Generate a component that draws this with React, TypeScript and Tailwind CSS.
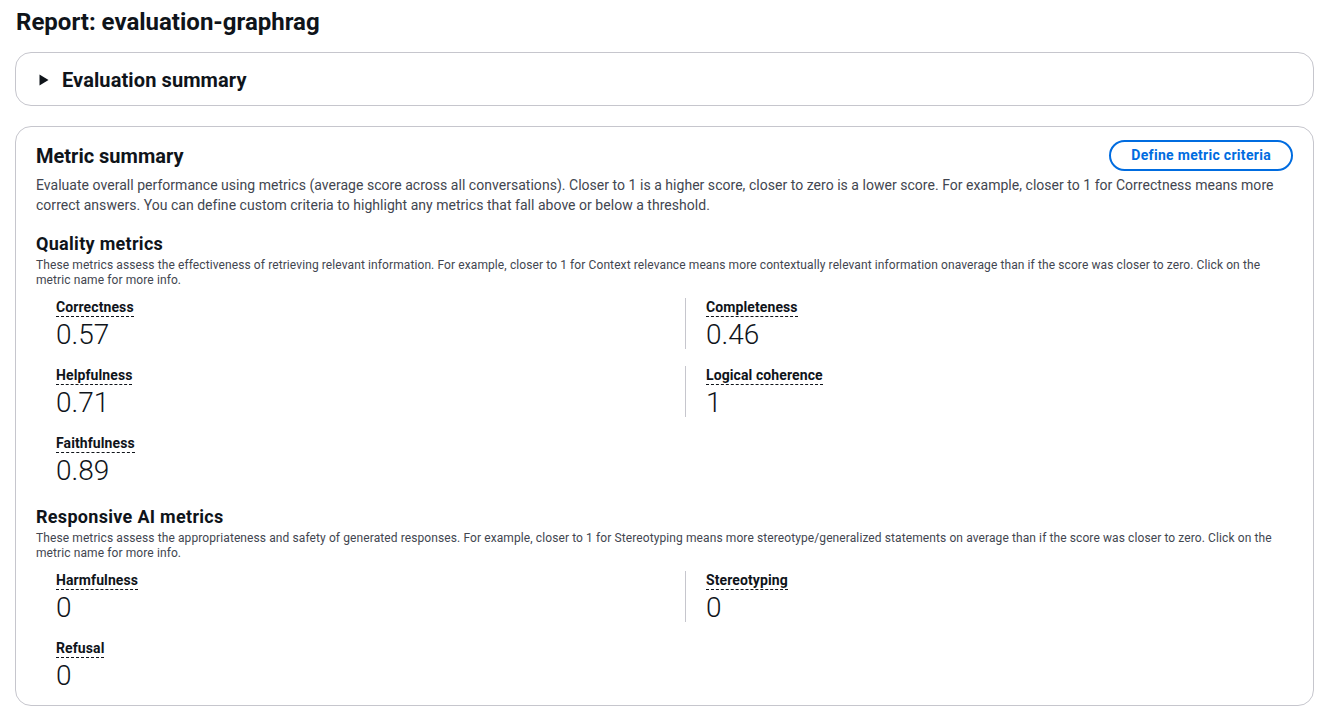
import React from "react";

const font = { fontFamily: "Roboto, Lato, sans-serif" };

function Metric({ label, value, border }: { label: string; value: string; border?: boolean }) {
  return (
    <div className={border ? "border-l border-[#c6c6cd] pl-5" : "pl-5"}>
      <div className="flex">
        <span className="text-[14px] leading-[18px] font-bold tracking-[0.1px] text-[#0f141a] border-b border-dashed border-[#0f141a]">{label}</span>
      </div>
      <div className="mt-[4px] text-[28px] leading-[28px] font-light text-[#0f141a]">{value}</div>
    </div>
  );
}

export default function App() {
  return (
    <div className="bg-white min-h-[712px] pl-[15px] pr-[6px] pt-[7px] text-[#0f141a]" style={font}>
      <h1 className="pl-[1px] text-[24px] leading-[30px] font-bold">Report: evaluation-graphrag</h1>
      <div className="mt-[15px] h-[54px] rounded-[16px] border border-[#c6c6cd] flex items-center pl-[23px] pt-[1px]">
        <svg width="10" height="12" viewBox="0 0 10 12" className="mr-[13px]">
          <path d="M0.5 0.5 L9.5 6 L0.5 11.5 Z" fill="#0f141a" />
        </svg>
        <span className="text-[20px] font-bold tracking-[0.1px]">Evaluation summary</span>
      </div>
      <div className="mt-[20px] rounded-[16px] border border-[#c6c6cd] px-[20px] pt-[13px] pb-[15px]">
        <div className="flex items-center justify-between">
          <h2 className="text-[20px] leading-[24px] font-bold">Metric summary</h2>
          <button className="h-[31px] px-[20px] rounded-full border-2 border-[#006ce0] text-[#006ce0] text-[14px] font-bold tracking-[0.3px]">
            Define metric criteria
          </button>
        </div>
        <p className="mt-[4px] text-[14px] leading-[20px] tracking-[0.03px] text-[#424650]">
          Evaluate overall performance using metrics (average score across all conversations). Closer to 1 is a higher score, closer to zero is a lower score. For example, closer to 1 for Correctness means more correct answers. You can define custom criteria to highlight any metrics that fall above or below a threshold.
        </p>
        <h3 className="mt-[18px] text-[18px] leading-[22px] font-bold tracking-[0.3px]">Quality metrics</h3>
        <p className="mt-[3px] text-[12px] leading-[15px] tracking-[0.1px] text-[#424650]">
          These metrics assess the effectiveness of retrieving relevant information. For example, closer to 1 for Context relevance means more contextually relevant information onaverage than if the score was closer to zero. Click on the metric name for more info.
        </p>
        <div className="mt-[10px] grid grid-cols-[649px_1fr] gap-y-[17px]">
          <Metric label="Correctness" value="0.57" />
          <Metric label="Completeness" value="0.46" border />
          <Metric label="Helpfulness" value="0.71" />
          <Metric label="Logical coherence" value="1" border />
          <Metric label="Faithfulness" value="0.89" />
        </div>
        <h3 className="mt-[21px] text-[18px] leading-[22px] font-bold tracking-[0.3px]">Responsive AI metrics</h3>
        <p className="mt-[3px] text-[12px] leading-[15px] tracking-[0.1px] text-[#424650]">
          These metrics assess the appropriateness and safety of generated responses. For example, closer to 1 for Stereotyping means more stereotype/generalized statements on average than if the score was closer to zero. Click on the metric name for more info.
        </p>
        <div className="mt-[10px] grid grid-cols-[649px_1fr] gap-y-[17px]">
          <Metric label="Harmfulness" value="0" />
          <Metric label="Stereotyping" value="0" border />
          <Metric label="Refusal" value="0" />
        </div>
      </div>
    </div>
  );
}
